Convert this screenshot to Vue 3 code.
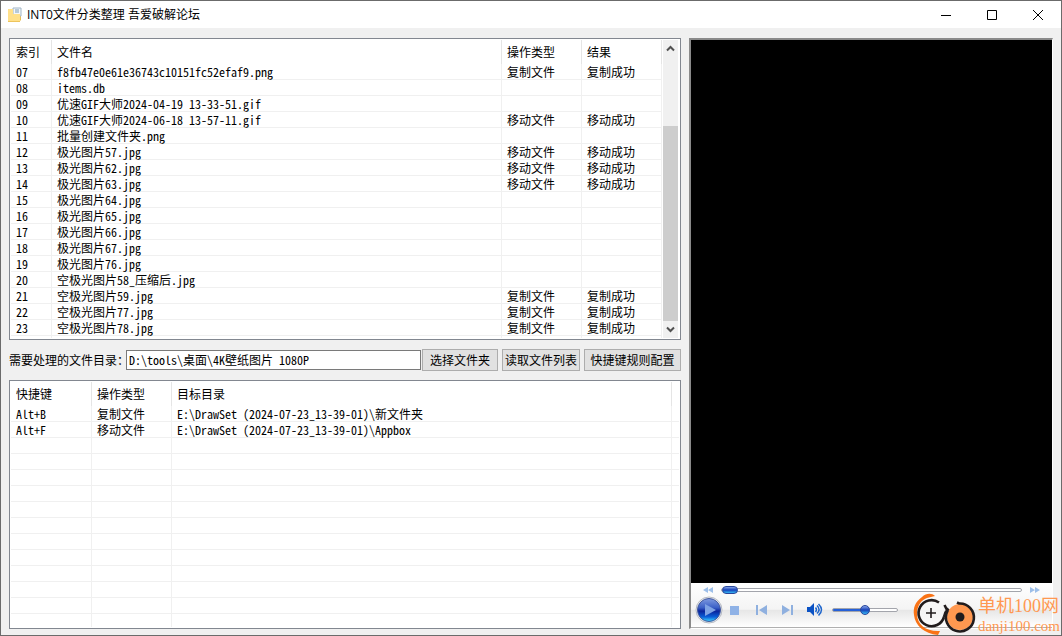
<script setup>
import { ref } from 'vue'

const copy = ['复制文件', '复制成功']
const move = ['移动文件', '移动成功']
const none = ['', '']

const files = [
  ['07', 'f8fb47e0e61e36743c10151fc52efaf9.png', ...copy],
  ['08', 'items.db', ...none],
  ['09', '优速GIF大师2024-04-19 13-33-51.gif', ...none],
  ['10', '优速GIF大师2024-06-18 13-57-11.gif', ...move],
  ['11', '批量创建文件夹.png', ...none],
  ['12', '极光图片57.jpg', ...move],
  ['13', '极光图片62.jpg', ...move],
  ['14', '极光图片63.jpg', ...move],
  ['15', '极光图片64.jpg', ...none],
  ['16', '极光图片65.jpg', ...none],
  ['17', '极光图片66.jpg', ...none],
  ['18', '极光图片67.jpg', ...none],
  ['19', '极光图片76.jpg', ...none],
  ['20', '空极光图片58_压缩后.jpg', ...none],
  ['21', '空极光图片59.jpg', ...copy],
  ['22', '空极光图片77.jpg', ...copy],
  ['23', '空极光图片78.jpg', ...copy],
]

const rules = [
  ['Alt+B', '复制文件', 'E:\\DrawSet (2024-07-23_13-39-01)\\新文件夹'],
  ['Alt+F', '移动文件', 'E:\\DrawSet (2024-07-23_13-39-01)\\Appbox'],
  ...Array.from({ length: 11 }, () => ['', '', '']),
]

const folder = ref('D:\\tools\\桌面\\4K壁纸图片 1080P')
const volume = ref(50)
const position = ref(0)
</script>

<template>
  <div class="window">
    <header class="titlebar">
      <svg class="app-icon" viewBox="0 0 16 16" aria-hidden="true">
        <path d="M1 2.5h5l1-1h7v12H1z" fill="#e8bd55" />
        <path d="M6 1h8v8H6z" fill="#f4f7fa" stroke="#9fb4c6" />
        <path d="M8 3h4M8 5h4" stroke="#7d9db8" />
        <path d="M1 2h5v5h7v8H1z" fill="#ffe08a" />
        <path d="M1 14h12v1H1z" fill="#edc45c" />
      </svg>
      <h1>INT0文件分类整理 吾爱破解论坛</h1>
      <button class="win" aria-label="最小化"><svg viewBox="0 0 12 12"><path d="M1 6.5h10" /></svg></button>
      <button class="win" aria-label="最大化"><svg viewBox="0 0 12 12"><path d="M1.500 1.500h9v9h-9z" /></svg></button>
      <button class="win" aria-label="关闭"><svg viewBox="0 0 12 12"><path d="M1 1l10 10M11 1L1 11" /></svg></button>
    </header>

    <main>
      <section class="left">
        <div class="list files">
          <div class="view">
            <table>
              <colgroup><col class="c-index" /><col /><col class="c-80" /><col class="c-80" /></colgroup>
              <thead>
                <tr><th>索引</th><th>文件名</th><th>操作类型</th><th>结果</th></tr>
              </thead>
              <tbody>
                <tr v-for="row in files" :key="row[0]">
                  <td v-for="(cell, i) in row" :key="i">{{ cell }}</td>
                </tr>
                <tr class="rest"><td></td><td></td><td></td><td></td></tr>
              </tbody>
            </table>
          </div>
          <div class="scrollbar">
            <button aria-label="向上滚动"><svg viewBox="0 0 9 7"><path d="M1 5.500l3.500-3.500L8 5.500" /></svg></button>
            <div class="track"><div class="thumb"></div></div>
            <button aria-label="向下滚动"><svg viewBox="0 0 9 7"><path d="M1 1.500l3.500 3.500L8 1.500" /></svg></button>
          </div>
        </div>

        <form class="tools" @submit.prevent>
          <label for="folder">需要处理的文件目录：</label>
          <input id="folder" v-model="folder" type="text" />
          <button type="button" class="pick">选择文件夹</button>
          <button type="button" class="read">读取文件列表</button>
          <button type="button" class="config">快捷键规则配置</button>
        </form>

        <div class="list rules">
          <div class="view">
            <table>
              <colgroup><col class="c-first" /><col class="c-80" /><col /><col class="c-end" /></colgroup>
              <thead>
                <tr><th>快捷键</th><th>操作类型</th><th>目标目录</th><td></td></tr>
              </thead>
              <tbody>
                <tr v-for="(row, r) in rules" :key="r">
                  <td v-for="(cell, i) in row" :key="i">{{ cell }}</td>
                  <td></td>
                </tr>
                <tr class="rest"><td></td><td></td><td></td><td></td></tr>
              </tbody>
            </table>
          </div>
        </div>
      </section>

      <section class="player">
        <div class="screen"></div>
        <div class="controls">
          <div class="seek">
            <button aria-label="快退"><svg width="10" height="6" viewBox="0 0 10 6"><path d="M5 0v6L0 3zM10 0v6L5 3z" fill="#9dbfe9" /></svg></button>
            <input v-model="position" type="range" min="0" max="100" aria-label="播放进度" />
            <button aria-label="快进"><svg width="10" height="6" viewBox="0 0 10 6"><path d="M0 0v6l5-3zM5 0v6l5-3z" fill="#9dbfe9" /></svg></button>
          </div>
          <div class="buttons">
            <button class="play" aria-label="播放">
              <svg width="28" height="28" viewBox="0 0 28 28">
                <defs>
                  <linearGradient id="ball" x1="0" y1="0" x2="0" y2="1">
                    <stop offset="0" stop-color="#7f9be0" />
                    <stop offset=".4" stop-color="#3a5fc6" />
                    <stop offset=".55" stop-color="#0a249c" />
                    <stop offset=".8" stop-color="#0a5fd8" />
                    <stop offset="1" stop-color="#40d8ff" />
                  </linearGradient>
                </defs>
                <circle cx="14" cy="14" r="13" fill="#f1f3f6" stroke="#b6bac2" />
                <circle cx="14" cy="14" r="11.500" fill="url(#ball)" stroke="#44599c" />
                <path d="M10 8l11 6-11 6z" fill="#7fa3e4" />
              </svg>
            </button>
            <button class="stop" aria-label="停止"><svg width="9" height="9" viewBox="0 0 9 9"><path d="M0 0h9v9H0z" fill="#8fb2e6" /></svg></button>
            <button class="prev" aria-label="上一个"><svg width="12" height="10" viewBox="0 0 12 10"><path d="M0 0h2v10H0zM11 0v10L3 5z" fill="#8fb0df" /></svg></button>
            <button class="next" aria-label="下一个"><svg width="12" height="10" viewBox="0 0 12 10"><path d="M9 0h2v10H9zM0 0v10l8-5z" fill="#8fb0df" /></svg></button>
            <button class="mute" aria-label="静音">
              <svg width="16" height="14" viewBox="0 0 16 14">
                <path d="M0 4h3l4-4v13L3 9H0z" fill="#0b52c4" />
                <path d="M8.500 4.500q2 2.200 0 4.500M10 2.500q4 4 0 8M11.500 1q6 5.700 0 11.500" fill="none" stroke="#1f66cc" stroke-width="1.500" />
              </svg>
            </button>
            <input v-model="volume" class="volume" type="range" min="0" max="100" aria-label="音量" />
          </div>
        </div>
      </section>
    </main>

    <a class="brand" href="#">
      <svg width="64" height="42" viewBox="0 0 64 42" aria-hidden="true">
        <path d="M22 3C19 0 13 0 9 4 2 9 0 15 1 22c1 10 10 19 24 20l2-4C14 39 4 32 4 21 4 13 8 7 14 5z" fill="#f97316" />
        <circle cx="18" cy="20" r="13" fill="#f8f8f8" fill-opacity=".7" />
        <path d="M26 9.500A13 13 0 1 0 31 24" fill="none" stroke="#211c1d" stroke-width="2.600" />
        <path d="M18 15v10M13 20h10" stroke="#211c1d" stroke-width="1.600" />
        <circle cx="47" cy="24" r="13" fill="#ff9850" />
        <path d="M44 9.500l2 1a14 14 0 1 1-11.500 7.500L31.500 12M31 24q1-5 4.500-8.500" fill="none" stroke="#211c1d" stroke-width="2.600" />
        <circle cx="47" cy="24" r="4.500" fill="#211c1d" />
      </svg>
      <span class="brand-text"><b>单机100网</b><small>danji100.com</small></span>
    </a>
  </div>
</template>

<style>
body {
  margin: 0;
  background: #f0f0f0;
}
</style>

<style scoped>
* {
  box-sizing: border-box;
}
.window {
  position: relative;
  display: flex;
  flex-direction: column;
  min-height: 100vh;
  border: 1px solid #6b6b6b;
  background: #f0f0f0;
  color: #000;
  font: 12px/16px "Noto Sans CJK SC", sans-serif;
}
button,
input {
  font: inherit;
  color: inherit;
  margin: 0;
}
button {
  padding: 0;
  border: 0;
  background: none;
}
.titlebar {
  display: flex;
  align-items: center;
  height: 27px;
  padding-left: 6px;
  background: #fff;
}
.app-icon {
  width: 16px;
  height: 16px;
}
h1 {
  flex: 1;
  margin: 0 0 0 4px;
  font: 12px/16px "Open Sans", "Noto Sans CJK SC", sans-serif;
}
.win {
  display: grid;
  place-items: center;
  width: 46px;
  height: 27px;
}
.win svg {
  width: 12px;
  height: 12px;
  fill: none;
  stroke: #000;
}
main {
  flex: 1;
  display: grid;
  grid-template-columns: minmax(0, 1fr) 364px;
  gap: 8px;
  padding: 10px 8px 6px;
}
.left {
  display: flex;
  flex-direction: column;
}
.list {
  display: flex;
  padding: 1px;
  border: 1px solid #828790;
  background: #fff;
}
.rules {
  flex: 1;
}
.view {
  flex: 1;
  min-width: 0;
  display: flex;
}
table {
  width: 100%;
  table-layout: fixed;
  border-collapse: separate;
  border-spacing: 0;
  font-feature-settings: "hwid";
}
.c-index {
  width: 41px;
}
.c-80 {
  width: 80px;
}
.c-first {
  width: 81px;
}
.c-end {
  width: 7px;
}
th {
  height: 24px;
  padding: 0 5px;
  border-right: 1px solid #e5e5e5;
  font-weight: 400;
  text-align: left;
}
tbody td {
  height: 16px;
  padding: 0 5px;
  border-right: 1px solid #f0f0f0;
  border-bottom: 1px solid #f0f0f0;
  line-height: 15px;
  white-space: pre;
}
td:last-child {
  padding: 0 0 0 5px;
}
tbody .rest td {
  height: 2px;
  border-bottom: 0;
}
.rules .rest td {
  height: auto;
}
.rules tbody td:last-child {
  border-right: 0;
}
.scrollbar {
  display: flex;
  flex-direction: column;
  width: 15px;
  margin: 0 1px;
  background: #f0f0f0;
}
.scrollbar button {
  display: grid;
  place-items: center;
  height: 17px;
}
.scrollbar svg {
  width: 9px;
  height: 7px;
  fill: none;
  stroke: #505050;
  stroke-width: 2;
}
.track {
  flex: 1;
  display: flex;
  flex-direction: column;
  justify-content: flex-end;
}
.thumb {
  height: 74%;
  background: #cdcdcd;
}
.tools {
  display: flex;
  align-items: center;
  height: 40px;
}
.tools label {
  width: 117px;
  white-space: nowrap;
}
.tools input {
  flex: 1;
  min-width: 0;
  height: 20px;
  padding: 0 2px 2px;
  border: 1px solid #7a7a7a;
  background: #fff;
  font-feature-settings: "hwid";
}
.tools button {
  height: 22px;
  border: 1px solid #adadad;
  background: #e1e1e1;
  white-space: nowrap;
}
.tools .pick {
  width: 76px;
  margin-left: 1px;
}
.tools .read {
  width: 78px;
  margin: 0 4px;
}
.tools .config {
  width: 97px;
}
.player {
  display: flex;
  flex-direction: column;
  border-style: solid;
  border-width: 2px 1px 1px 2px;
  border-color: #8a8a8a #fff #fff #8a8a8a;
}
.screen {
  flex: 1;
  background: #000;
}
.controls {
  height: 45px;
  border-bottom: 1px solid #b0b0b0;
  background: linear-gradient(#fff, #f4f4f4 60%, #e6e6e6 61%, #fff);
}
.seek {
  display: flex;
  align-items: center;
  gap: 8px;
  height: 13px;
  padding: 0 12px;
}
.seek button {
  display: flex;
}
.seek input {
  flex: 1;
  min-width: 0;
}
input[type="range"] {
  appearance: none;
  height: 12px;
  background: none;
}
input[type="range"]::-webkit-slider-runnable-track {
  height: 4px;
  border: 1px solid #a3a5ac;
  border-radius: 2px;
  background: #fff;
}
input[type="range"]::-webkit-slider-thumb {
  appearance: none;
  width: 16px;
  height: 8px;
  margin-top: -3px;
  border: 1px solid #29479c;
  border-radius: 4px;
  background: linear-gradient(#87a5e8, #1740b8 50%, #35b8f5);
}
.buttons {
  display: flex;
  align-items: center;
  height: 28px;
  padding-left: 4px;
}
.buttons button {
  display: flex;
}
.stop {
  margin-left: 7px;
}
.prev {
  margin-left: 17px;
}
.next {
  margin-left: 14px;
}
.mute {
  margin-left: 13px;
}
.volume {
  width: 66px;
  margin-left: 9px;
}
.volume::-webkit-slider-runnable-track {
  background: linear-gradient(90deg, #2560d8 50%, #fff 50%) !important;
}
.volume::-webkit-slider-thumb {
  width: 10px !important;
  height: 10px !important;
  margin-top: -4px !important;
  border-radius: 5px !important;
}
.brand {
  position: absolute;
  right: 1px;
  bottom: 0;
  display: flex;
  align-items: flex-end;
  gap: 1px;
  color: #ff9850;
  text-decoration: none;
}
.brand-text {
  display: flex;
  flex-direction: column;
}
.brand b {
  font: 18px/22px "Liberation Serif", "Noto Sans CJK SC", serif;
}
.brand small {
  font: 15px/18px "Liberation Serif", serif;
}
</style>
